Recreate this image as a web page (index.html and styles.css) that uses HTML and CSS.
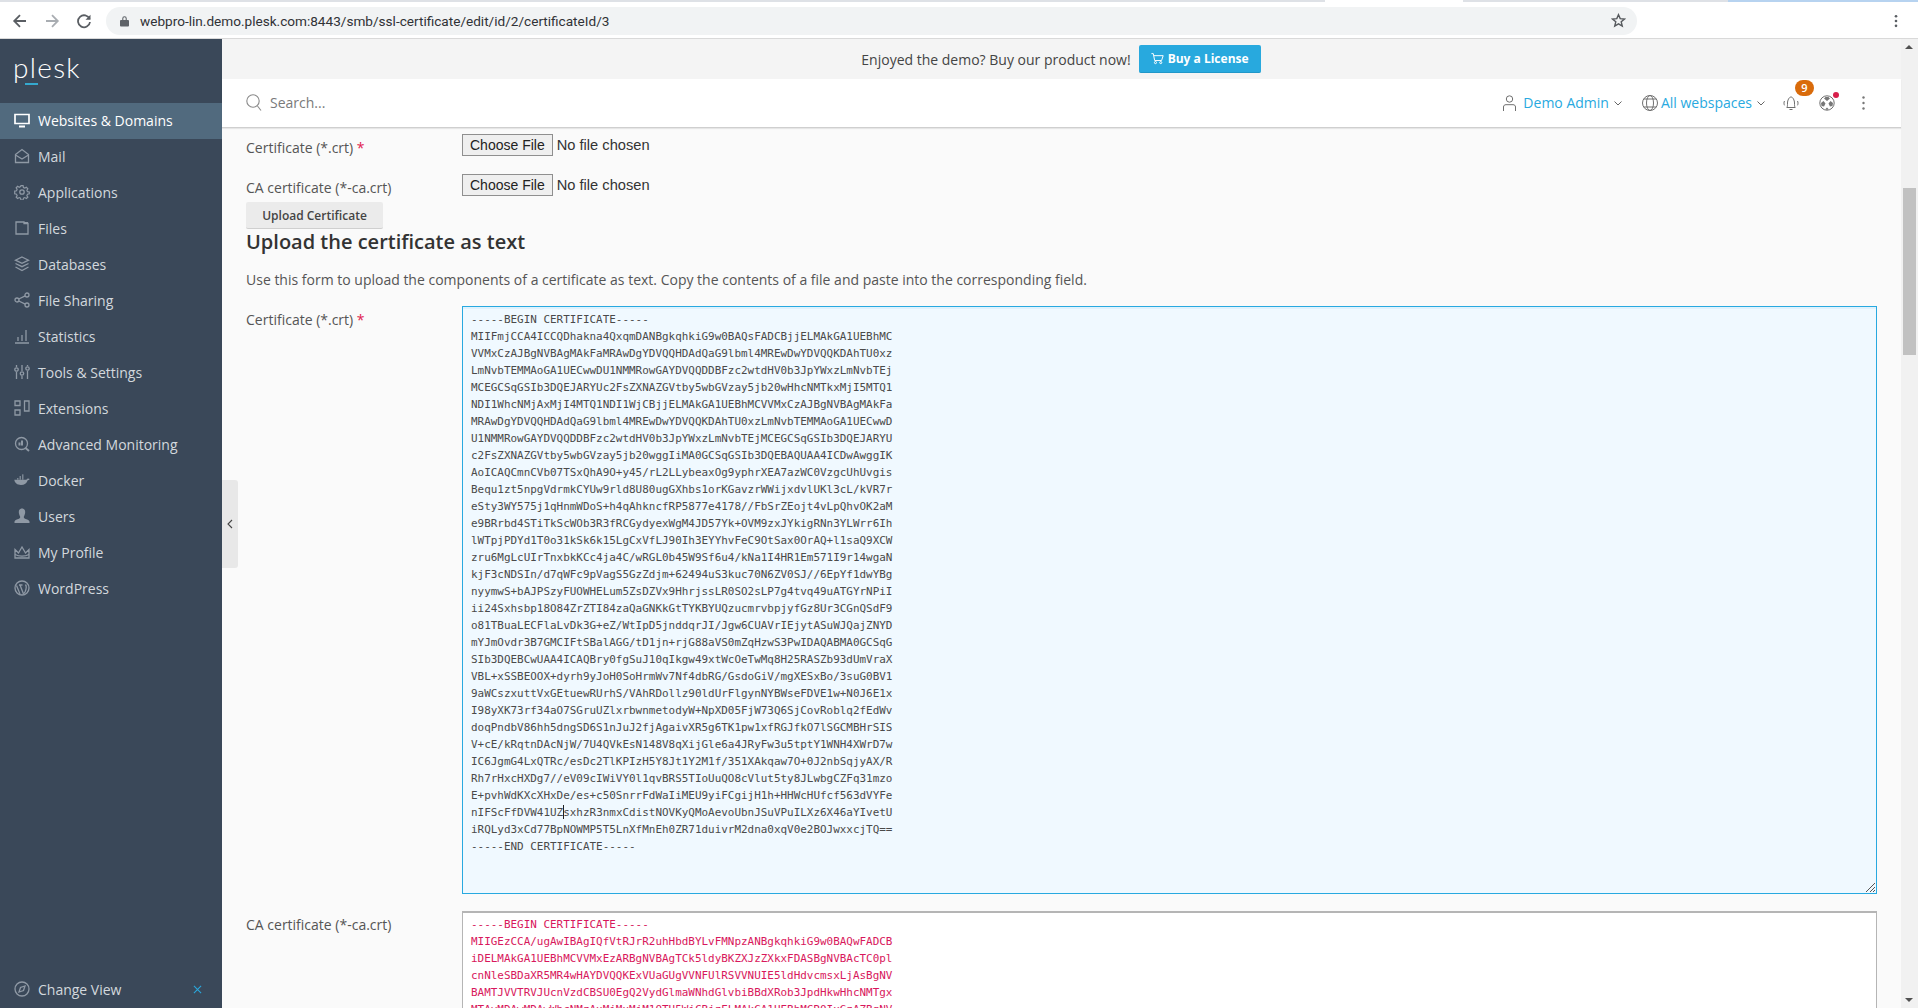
FILE: index.html
```html
<!DOCTYPE html>
<html lang="en">
<head>
<meta charset="utf-8">
<title>Plesk - SSL certificate</title>
<link rel="stylesheet" href="styles.css">
</head>
<body>
<div class="app">
  <div class="tabstrip"></div>
  <div class="chrome">
    <svg class="nav-ic first" viewBox="0 0 16 16"><path d="M14 8H2.500M8 2.200 2.200 8 8 13.800"/></svg>
    <svg class="nav-ic dim" viewBox="0 0 16 16"><path d="M2 8h11.500M8 2.200 13.800 8 8 13.800"/></svg>
    <svg class="nav-ic" viewBox="0 0 16 16"><path d="M13.600 6A6 6 0 1 0 14 9"/><path class="solid" d="M14.500 1.800v5h-5z"/></svg>
    <div class="omnibox">
      <svg class="lock" viewBox="0 0 10 12"><path d="M1 5h8a1 1 0 0 1 1 1v5a1 1 0 0 1-1 1H1a1 1 0 0 1-1-1V6a1 1 0 0 1 1-1zM2.500 5V3.200a2.500 2.500 0 0 1 5 0V5H6.300V3.200a1.300 1.300 0 0 0-2.600 0V5z"/></svg>
      <span class="url">webpro-lin.demo.plesk.com:8443/smb/ssl-certificate/edit/id/2/certificateId/3</span>
      <svg class="star" viewBox="0 0 16 16"><path d="M8 1.800 9.800 6l4.600.4-3.500 3 1.100 4.500L8 11.500l-4 2.400 1.100-4.500-3.500-3L6.200 6z"/></svg>
    </div>
    <svg class="chrome-menu" viewBox="0 0 4 16"><circle cx="2" cy="2.500" r="1.500"/><circle cx="2" cy="8" r="1.500"/><circle cx="2" cy="13.500" r="1.500"/></svg>
  </div>

  <div class="workspace">
    <aside class="sidebar">
      <div class="logo"><span class="logo-text">plesk</span><span class="logo-mark"></span></div>
      <nav class="nav">
        <a class="nav-item active"><svg class="ic" viewBox="0 0 16 16"><path d="M1 2.500h14v9H1z"/><path class="thick" d="M5 14.500h6"/></svg>Websites &amp; Domains</a>
        <a class="nav-item"><svg class="ic" viewBox="0 0 16 16"><path d="M1.500 6.500 8 1.500l6.500 5v8h-13z"/><path d="m1.500 7 6.500 4 6.500-4"/></svg>Mail</a>
        <a class="nav-item"><svg class="ic" viewBox="0 0 16 16"><circle cx="8" cy="8" r="2.200"/><path d="M6.800 1h2.400l.4 2 1.500.7 1.800-1 1.600 1.700-1.100 1.700.7 1.500 2 .4v2l-2 .4-.7 1.600 1.100 1.700-1.600 1.500-1.800-1-1.500.7-.4 2H6.800l-.4-2-1.500-.7-1.800 1-1.600-1.500 1.100-1.700-.7-1.600-2-.4V7l2-.4.700-1.500-1.100-1.700 1.600-1.700 1.800 1 1.500-.7z" transform="translate(.8 .8) scale(.9)"/></svg>Applications</a>
        <a class="nav-item"><svg class="ic" viewBox="0 0 16 16"><path d="M2 2v12h12V3.500h-4V2z"/><path class="thick" d="M10 3h4"/></svg>Files</a>
        <a class="nav-item"><svg class="ic" viewBox="0 0 16 16"><path d="m8 1 6.500 3.200L8 7.400 1.500 4.200z"/><path d="m1.500 7.500 6.500 3.200 6.500-3.200M1.500 11 8 14.500l6.500-3.500"/></svg>Databases</a>
        <a class="nav-item"><svg class="ic" viewBox="0 0 16 16"><circle cx="3" cy="8" r="2"/><circle cx="13" cy="3" r="2"/><circle cx="13" cy="13" r="2"/><path d="m4.800 7 6.400-3.200M4.800 9l6.400 3.200"/></svg>File Sharing</a>
        <a class="nav-item"><svg class="ic" viewBox="0 0 16 16"><path d="M1 15h14M4 13V9M8 13V7M12 13V2"/></svg>Statistics</a>
        <a class="nav-item"><svg class="ic" viewBox="0 0 16 16"><path d="M2.500 1v2M2.500 8v7M8 1v6M8 12v3M13.500 1v1M13.500 7v8"/><circle cx="2.500" cy="5.500" r="1.700"/><circle cx="8" cy="9.500" r="1.700"/><circle cx="13.500" cy="4.500" r="1.700"/></svg>Tools &amp; Settings</a>
        <a class="nav-item"><svg class="ic" viewBox="0 0 16 16"><path d="M1 1h5v4.500H1zM1 10h5v5H1zM10.500 1H15v10h-4.500z"/></svg>Extensions</a>
        <a class="nav-item"><svg class="ic" viewBox="0 0 16 16"><circle cx="7.500" cy="7.500" r="6"/><path class="thick" d="m11.500 12 3.500 3"/><path class="thick" d="M5.500 6.500v3M8 4.500v5"/></svg>Advanced Monitoring</a>
        <a class="nav-item"><svg class="ic" viewBox="0 0 16 16"><path class="solid" d="M.3 7.800h11.800c.7 0 1.200-.6 1.400-1.200.8-.2 1.700 0 2.200.5-.4.800-1.100 1.200-2 1.200C12.800 11.300 10.500 13 7 13 3.200 13 .8 11 .3 7.800z"/><path class="dots" d="M3 6.800h1.500M5.500 6.800H7M8 6.800h1.500M5.500 5H7M8 5h1.500M8 3.200h1.500"/></svg>Docker</a>
        <a class="nav-item"><svg class="ic" viewBox="0 0 16 16"><path class="solid" d="M8 .5c2 0 3.200 1.500 3.200 3.500S10.200 8 9.800 8.800c-.1.900.3 1.500 1.200 1.900 2 .7 4 1.200 4.500 2.800V15H.5v-1.500C1 12 3 11.400 5 10.700c.9-.4 1.300-1 1.200-1.900C5.800 8 4.800 6 4.800 4S6 .5 8 .5z"/></svg>Users</a>
        <a class="nav-item"><svg class="ic" viewBox="0 0 16 16"><path d="M1 5.500 4.500 9 8 3l3.500 6L15 5.500V14H1z"/><path d="M1 10.500c4 2 10 2 14 0"/></svg>My Profile</a>
        <a class="nav-item"><svg class="ic" viewBox="0 0 16 16"><circle cx="8" cy="8" r="7"/><path d="M2.500 5.500 6 14M5 5h3.500M6 5l3.500 9M11.500 4.500c1.500 2 1 4-.5 7.500l-1 1.500"/></svg>WordPress</a>
      </nav>
      <div class="change-view">
        <svg class="ic" viewBox="0 0 16 16"><circle cx="8" cy="8" r="7"/><path d="m5 11 1.500-4.500L11 5 9.500 9.500z"/></svg>
        <span class="change-label">Change View</span>
        <svg class="close-x" viewBox="0 0 10 10"><path d="m1 1 8 8M9 1 1 9"/></svg>
      </div>
    </aside>

    <button class="collapse" aria-label="Collapse"><svg viewBox="0 0 6 10"><path d="M5 1 1 5l4 4"/></svg></button>

    <main class="main">
      <div class="banner">
        <span>Enjoyed the demo? Buy our product now!</span>
        <a class="buy"><svg viewBox="0 0 16 16"><path d="M.5 2h2.300l1.700 8.500h8.500L15 4.500H3.500"/><circle cx="5.500" cy="13" r="1.300"/><circle cx="12" cy="13" r="1.300"/></svg>Buy a License</a>
      </div>
      <header class="topbar">
        <svg class="search-ic" viewBox="0 0 16 18"><circle cx="7" cy="7" r="6.200"/><path d="m11.500 12 3.500 4.500"/></svg>
        <span class="search">Search...</span>
        <svg class="tb-ic user-ic" viewBox="0 0 13 16"><circle cx="6.500" cy="4" r="3.200"/><path d="M.5 16v-4c0-1.500 1-2.300 2.500-2.300h7c1.500 0 2.500.8 2.500 2.300v4"/></svg>
        <a class="tb-link">Demo Admin</a>
        <svg class="chev" viewBox="0 0 8 5"><path d="m.5.500 3.500 3.500L7.500.500"/></svg>
        <svg class="tb-ic globe-ic" viewBox="0 0 16 16"><circle cx="8" cy="8" r="7.500"/><ellipse cx="8" cy="8" rx="3.500" ry="7.500"/><path d="M1.800 4h12.400M1.800 12h12.400"/></svg>
        <a class="tb-link near">All webspaces</a>
        <svg class="chev last" viewBox="0 0 8 5"><path d="m.5.500 3.500 3.500L7.500.500"/></svg>
        <div class="bell">
          <svg class="tb-ic" viewBox="0 0 16 16"><path d="M3.800 12.500c.7-1 .7-2 .7-4.500S6 2 8 2s3.500 3.500 3.500 6 0 3.500.7 4.500zM6.500 14.500h3M1.500 6c-.7 1.300-.7 3 0 4.300M14.500 6c.7 1.300.7 3 0 4.300"/></svg>
          <span class="badge">9</span>
        </div>
        <div class="team">
          <svg class="tb-ic" viewBox="0 0 16 16"><circle cx="8" cy="8" r="7.200"/><path class="solid" d="M5 3.500 8 6l3-2.500-1.500-1.500h-3zM2 8l2.500-2 2 2.500L5 11.500 2.500 11zM14 8l-2.500-2-2 2.500 1.500 3 2.500-.5zM6.500 14l1.500-1.500L9.500 14 8 15z"/></svg>
          <span class="dot"></span>
        </div>
        <svg class="kebab" viewBox="0 0 3 14"><circle cx="1.500" cy="1.500" r="1.200"/><circle cx="1.500" cy="7" r="1.200"/><circle cx="1.500" cy="12.500" r="1.200"/></svg>
      </header>

      <div class="content">
        <div class="row file-row">
          <label class="label">Certificate (*.crt) <span class="req">*</span></label>
          <input class="file" type="file">
        </div>
        <div class="row file-row second">
          <label class="label">CA certificate (*-ca.crt)</label>
          <input class="file" type="file">
        </div>
        <button class="upload">Upload Certificate</button>
        <h2 class="title">Upload the certificate as text</h2>
        <p class="desc">Use this form to upload the components of a certificate as text. Copy the contents of a file and paste into the corresponding field.</p>
        <div class="row text-row">
          <label class="label">Certificate (*.crt) <span class="req">*</span></label>
          <div class="code focus" role="textbox"><div>-----BEGIN CERTIFICATE-----
MIIFmjCCA4ICCQDhakna4QxqmDANBgkqhkiG9w0BAQsFADCBjjELMAkGA1UEBhMC
VVMxCzAJBgNVBAgMAkFaMRAwDgYDVQQHDAdQaG9lbml4MREwDwYDVQQKDAhTU0xz
LmNvbTEMMAoGA1UECwwDU1NMMRowGAYDVQQDDBFzc2wtdHV0b3JpYWxzLmNvbTEj
MCEGCSqGSIb3DQEJARYUc2FsZXNAZGVtby5wbGVzay5jb20wHhcNMTkxMjI5MTQ1
NDI1WhcNMjAxMjI4MTQ1NDI1WjCBjjELMAkGA1UEBhMCVVMxCzAJBgNVBAgMAkFa
MRAwDgYDVQQHDAdQaG9lbml4MREwDwYDVQQKDAhTU0xzLmNvbTEMMAoGA1UECwwD
U1NMMRowGAYDVQQDDBFzc2wtdHV0b3JpYWxzLmNvbTEjMCEGCSqGSIb3DQEJARYU
c2FsZXNAZGVtby5wbGVzay5jb20wggIiMA0GCSqGSIb3DQEBAQUAA4ICDwAwggIK
AoICAQCmnCVb07TSxQhA9O+y45/rL2LLybeaxOg9yphrXEA7azWC0VzgcUhUvgis
Bequ1zt5npgVdrmkCYUw9rld8U80ugGXhbs1orKGavzrWWijxdvlUKl3cL/kVR7r
eSty3WY575j1qHnmWDoS+h4qAhkncfRP5877e4178//FbSrZEojt4vLpQhvOK2aM
e9BRrbd4STiTkScWOb3R3fRCGydyexWgM4JD57Yk+OVM9zxJYkigRNn3YLWrr6Ih
lWTpjPDYd1T0o31kSk6k15LgCxVfLJ90Ih3EYYhvFeC9OtSax0OrAQ+l1saQ9XCW
zru6MgLcUIrTnxbkKCc4ja4C/wRGL0b45W9Sf6u4/kNa1I4HR1Em571I9r14wgaN
kjF3cNDSIn/d7qWFc9pVagS5GzZdjm+62494uS3kuc70N6ZV0SJ//6EpYf1dwYBg
nyymwS+bAJPSzyFUOWHELum5ZsDZVx9HhrjssLR0SO2sLP7g4tvq49uATGYrNPiI
ii24Sxhsbp18O84ZrZTI84zaQaGNKkGtTYKBYUQzucmrvbpjyfGz8Ur3CGnQSdF9
o81TBuaLECFlaLvDk3G+eZ/WtIpD5jnddqrJI/Jgw6CUAVrIEjytASuWJQajZNYD
mYJmOvdr3B7GMCIFtSBalAGG/tD1jn+rjG88aVS0mZqHzwS3PwIDAQABMA0GCSqG
SIb3DQEBCwUAA4ICAQBry0fgSuJ10qIkgw49xtWcOeTwMq8H25RASZb93dUmVraX
VBL+xSSBEOOX+dyrh9yJoH0SoHrmWv7Nf4dbRG/GsdoGiV/mgXESxBo/3suG0BV1
9aWCszxuttVxGEtuewRUrhS/VAhRDollz90ldUrFlgynNYBWseFDVE1w+N0J6E1x
I98yXK73rf34aO7SGruUZlxrbwnmetodyW+NpXD05FjW73Q6SjCovRoblq2fEdWv
doqPndbV86hh5dngSD6S1nJuJ2fjAgaivXR5g6TK1pw1xfRGJfkO7lSGCMBHrSIS
V+cE/kRqtnDAcNjW/7U4QVkEsN148V8qXijGle6a4JRyFw3u5tptY1WNH4XWrD7w
IC6JgmG4LxQTRc/esDc2TlKPIzH5Y8Jt1Y2M1f/351XAkqaw7O+0J2nbSqjyAX/R
Rh7rHxcHXDg7//eV09cIWiVY0l1qvBRS5TIoUuQO8cVlut5ty8JLwbgCZFq31mzo
E+pvhWdKXcXHxDe/es+c50SnrrFdWaIiMEU9yiFCgijH1h+HHWcHUfcf563dVYFe</div><div>nIFScFfDVW41UZ<span class="caret"></span>sxhzR3nmxCdistNOVKyQMoAevoUbnJSuVPuILXz6X46aYIvetU</div><div>iRQLyd3xCd77BpNOWMP5T5LnXfMnEh0ZR71duivrM2dna0xqV0e2BOJwxxcjTQ==
-----END CERTIFICATE-----</div><svg class="grip" viewBox="0 0 9 9"><path d="M9 0 0 9M9 4 4 9M9 7 7 9"/></svg></div>
        </div>
        <div class="row text-row ca-row">
          <label class="label">CA certificate (*-ca.crt)</label>
          <div class="code ca" role="textbox">-----BEGIN CERTIFICATE-----
MIIGEzCCA/ugAwIBAgIQfVtRJrR2uhHbdBYLvFMNpzANBgkqhkiG9w0BAQwFADCB
iDELMAkGA1UEBhMCVVMxEzARBgNVBAgTCk5ldyBKZXJzZXkxFDASBgNVBAcTC0pl
cnNleSBDaXR5MR4wHAYDVQQKExVUaGUgVVNFUlRSVVNUIE5ldHdvcmsxLjAsBgNV
BAMTJVVTRVJUcnVzdCBSU0EgQ2VydGlmaWNhdGlvbiBBdXRob3JpdHkwHhcNMTgx
MTAyMDAwMDAwWhcNMzAxMjMxMjM1OTU5WjCBjzELMAkGA1UEBhMCR0IxGzAZBgNV</div>
        </div>
      </div>
    </main>

    <div class="scrollbar">
      <span class="arrow up"></span>
      <span class="thumb"></span>
      <span class="arrow down"></span>
    </div>
  </div>
</div>
</body>
</html>
```
FILE: styles.css
```css
* { box-sizing: border-box; }
html, body { margin: 0; height: 100%; overflow: hidden; }
body { font-family: "Open Sans", sans-serif; font-size: 14px; color: #444; background: #fff; }
.app { position: relative; display: flex; flex-direction: column; height: 1008px; }

.tabstrip { height: 2px; flex: none; background: linear-gradient(to right, #dee1e6 0, #dee1e6 1325px, #fff 1325px, #fff 1463px, #dee1e6 1463px, #dee1e6 1728px, #b7d3f0 1728px); }
.chrome { height: 37px; flex: none; display: flex; align-items: center; background: #fff; border-bottom: 1px solid #d9d9d9; padding-top: 1px; }
.nav-ic { width: 16px; height: 16px; margin-right: 16px; fill: none; stroke: #5a5e63; stroke-width: 1.800; flex: none; }
.nav-ic.first { margin-left: 12px; }
.nav-ic.dim { stroke: #a9adb2; }
.nav-ic .solid { fill: #5a5e63; stroke: none; }
.omnibox { width: 1531px; height: 28px; margin-left: -2px; border-radius: 14px; background: #f1f3f4; display: flex; align-items: center; padding: 0 11px 0 14px; }
.lock { width: 9px; height: 12px; fill: #5f6368; flex: none; }
.url { margin-left: 11px; font-family: "Roboto", sans-serif; font-size: 13.6px; color: #303236; flex: 1; }
.star { width: 15px; height: 15px; fill: none; stroke: #55585c; stroke-width: 1.500; flex: none; }
.chrome-menu { width: 4px; height: 14px; fill: #5a5e63; margin-left: 257px; flex: none; }

.workspace { position: relative; flex: 1; min-height: 0; display: flex; }
.sidebar { width: 222px; flex: none; display: flex; flex-direction: column; background: #3a4859; color: #d3d8dd; }
.logo { height: 64px; flex: none; position: relative; padding: 10px 0 0 13px; }
.logo-text { font-family: "Lato", sans-serif; font-weight: 300; font-size: 28px; line-height: 36px; color: #fff; letter-spacing: 1.300px; display: block; }
.logo-mark { position: absolute; left: 25px; top: 44px; width: 13px; height: 2px; background: #35a9cf; }
.nav { flex: 1; }
.nav-item { display: flex; align-items: center; height: 36px; padding: 0 0 2px 14px; gap: 8px; color: #d3d8dd; font-size: 14px; }
.nav-item.active { background: #516a7e; color: #fff; }
.ic { width: 16px; height: 16px; flex: none; fill: none; stroke: #8f99a5; stroke-width: 1.300; }
.ic .thick { stroke-width: 2; }
.ic .solid { fill: #8f99a5; stroke: none; }
.ic .dots { stroke-width: 1.300; }
.active .ic { stroke: #fff; stroke-width: 1.700; }
.change-view { height: 36px; flex: none; display: flex; align-items: center; padding: 0 20px 2px 14px; gap: 8px; }
.change-label { flex: 1; }
.close-x { width: 9px; height: 9px; fill: none; stroke: #2aa7dc; stroke-width: 1.200; }

.collapse { position: absolute; left: 222px; top: 441px; width: 16px; height: 88px; padding: 0; border: 0; border-radius: 0 3px 3px 0; background: #e8e8e8; display: flex; align-items: center; justify-content: center; z-index: 2; }
.collapse svg { width: 6px; height: 10px; fill: none; stroke: #444; stroke-width: 1.100; }

.main { flex: 1; min-width: 0; display: flex; flex-direction: column; background: #fafafa; }
.banner { height: 40px; flex: none; background: #f4f4f4; display: flex; align-items: center; justify-content: center; gap: 8px; font-size: 14px; color: #444; padding-right: 1px; }
.buy { display: flex; align-items: center; gap: 4px; width: 122px; height: 28px; padding-left: 12px; background: #28a9de; border-bottom: 1px solid #2197c8; border-radius: 2px; color: #fff; font-size: 12px; font-weight: 700; }
.buy svg { width: 13px; height: 13px; fill: none; stroke: #fff; stroke-width: 1.200; flex: none; }
.topbar { height: 49px; flex: none; background: #fff; border-bottom: 1px solid #cfcfcf; box-shadow: 0 1px 1px rgba(0,0,0,.08); display: flex; align-items: center; padding: 0 0 1px 24px; position: relative; z-index: 1; }
.search-ic { width: 16px; height: 18px; fill: none; stroke: #8a8a8a; stroke-width: 1.100; flex: none; }
.search { margin-left: 8px; flex: 1; color: #7a7a7a; font-size: 14px; }
.tb-ic { fill: none; stroke: #6f6f6f; stroke-width: 1; flex: none; width: 16px; height: 16px; display: block; }
.tb-ic .solid { fill: #777; stroke: none; }
.user-ic { width: 13px; }
.tb-link { margin-left: 7px; color: #28a9e0; font-size: 14px; }
.tb-link.near { margin-left: 3px; }
.chev { width: 8px; height: 5px; fill: none; stroke: #666; stroke-width: 1; margin: 1px 20px 0 5px; flex: none; }
.chev.last { margin-right: 18px; }
.bell { position: relative; }
.badge { position: absolute; left: 12px; top: -15px; width: 19px; height: 16px; border-radius: 8px; background: #d96b0b; color: #fff; font-size: 11px; font-weight: 600; line-height: 16px; text-align: center; }
.team { position: relative; margin-left: 20px; }
.dot { position: absolute; left: 14px; top: -3px; width: 6px; height: 6px; border-radius: 50%; background: #d81f4b; }
.kebab { width: 3px; height: 14px; fill: #777; margin: 0 36px 0 27px; flex: none; }

.content { flex: 1; min-height: 0; overflow: hidden; padding: 6px 24px 0; }
.row { display: grid; grid-template-columns: 216px 1fr; }
.row.second { margin-top: 16px; }
.label { padding-top: 4px; line-height: 20px; font-size: 14px; color: #555; }
.req { color: #e0204f; }
.file { font-family: "Liberation Sans", sans-serif; font-size: 14.67px; color: #333; height: 22px; display: block; }
.file::file-selector-button { font-family: inherit; font-size: 14px; height: 22px; padding: 0 7px; margin-right: 4px; border: 1px solid #8f8f8f; border-radius: 0; background: #efefef; color: #222; }
.upload { display: block; margin-top: 4px; width: 137px; height: 27px; padding: 0; border: 0; border-bottom: 1px solid #cfcfcf; border-radius: 2px; background: #ebebeb; color: #444; font-family: "Open Sans", sans-serif; font-size: 12px; font-weight: 600; }
.title { margin: 0; font-size: 20px; line-height: 26px; font-weight: 600; color: #333; }
.desc { margin: 15px 0 0; font-size: 14px; line-height: 20px; color: #555; }
.text-row { margin-top: 16px; }
.ca-row { margin-top: 17px; }
.code { position: relative; margin: 0; height: 588px; padding: 4px 8px; white-space: pre; overflow: hidden; font-family: "DejaVu Sans Mono", monospace; font-size: 10.95px; line-height: 17px; color: #4a4a4a; border: 1px solid #b5b5b5; background: #fff; }
.code.focus { border-color: #28a9e0; background: #f0f9ff; box-shadow: inset 0 2px 0 #dff2fd; }
.code.ca { color: #d8185c; border-top-width: 2px; padding-top: 3px; }
.caret { display: inline-block; width: 0; height: 14px; margin-right: -1px; border-left: 1px solid #222; vertical-align: -3px; }
.grip { position: absolute; right: 1px; bottom: 1px; width: 9px; height: 9px; fill: none; stroke: #555; stroke-width: 1; }

.scrollbar { width: 17px; flex: none; position: relative; background: #f1f1f1; display: flex; flex-direction: column; align-items: center; }
.thumb { width: 13px; height: 167px; margin-top: 149px; background: #c1c1c1; }
.arrow { position: absolute; left: 4px; width: 0; height: 0; border-left: 4px solid transparent; border-right: 4px solid transparent; }
.arrow.up { top: 6px; border-bottom: 4px solid #505050; }
.arrow.down { bottom: 6px; border-top: 4px solid #505050; }
```
